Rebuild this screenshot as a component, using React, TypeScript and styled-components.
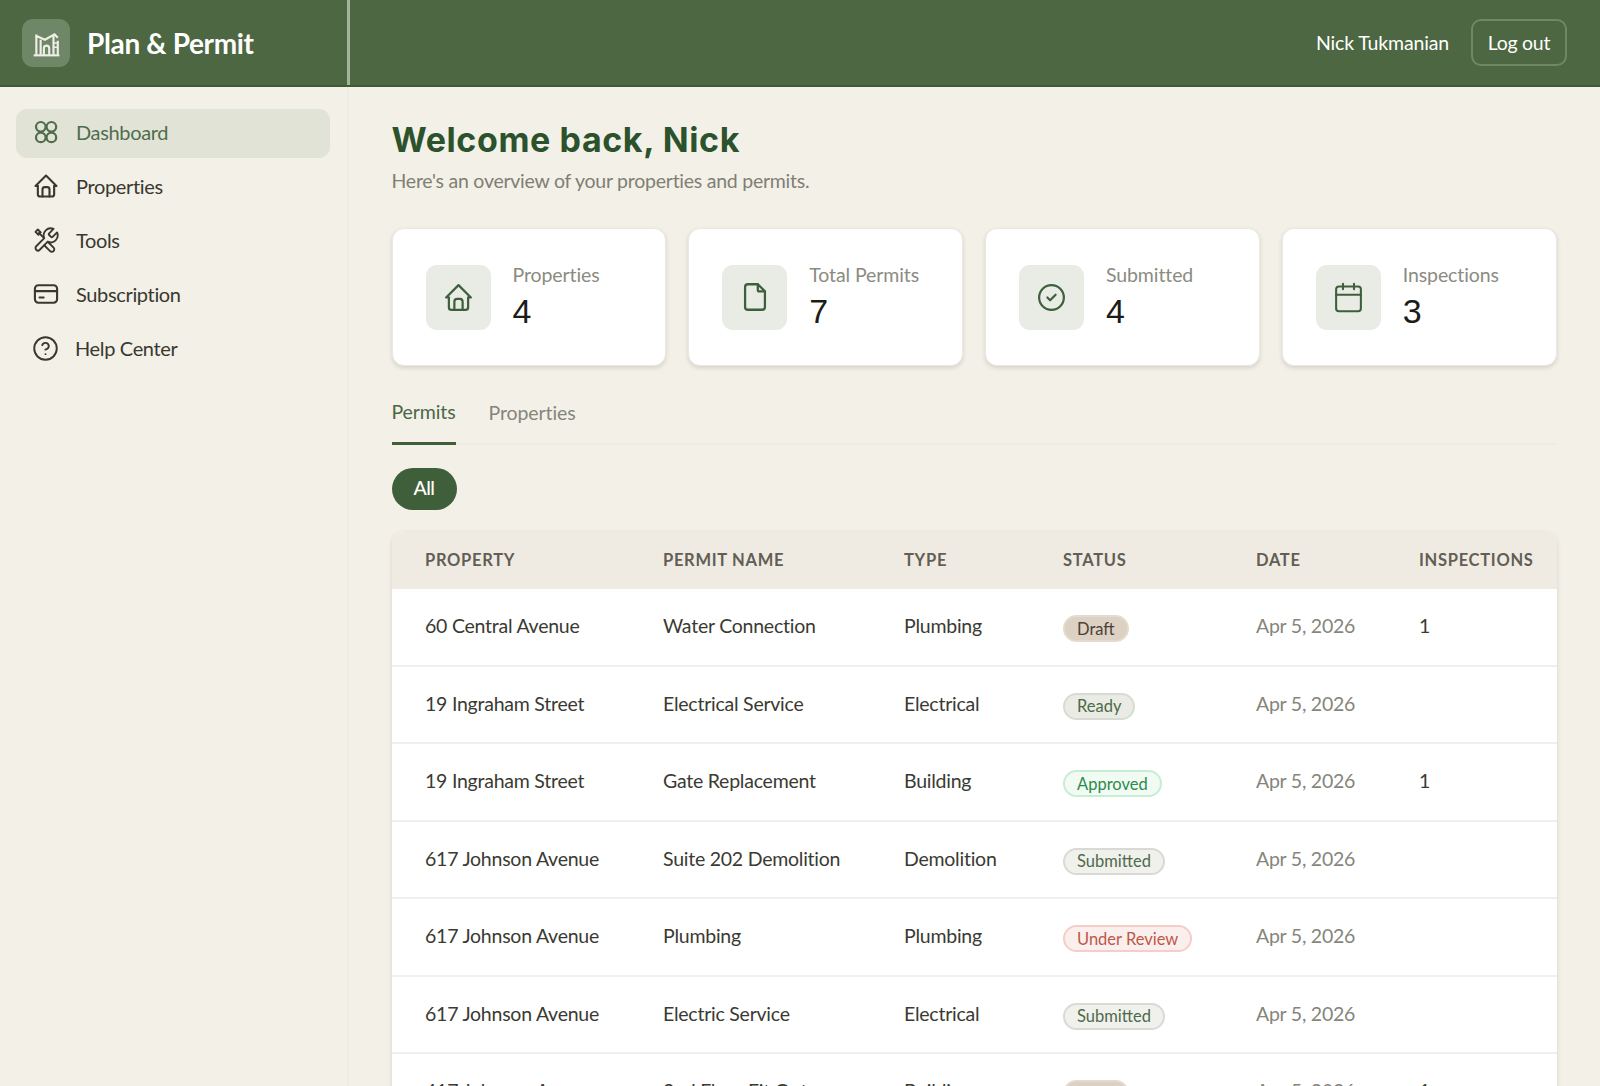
import styled, { createGlobalStyle } from 'styled-components';
import { TbCircleCheck, TbFile, TbHome } from 'react-icons/tb';
import { Calendar, CircleHelp } from 'lucide-react';

type Tone = 'draft' | 'ready' | 'approved' | 'submitted' | 'review';

const toneColors: Record<Tone, { bg: string; border: string; text: string }> = {
  draft: { bg: '#dcd1c3', border: '#e3dbcf', text: '#4b4137' },
  ready: { bg: '#e9ebe4', border: '#d8dbd2', text: '#4d6a49' },
  approved: { bg: '#f1fbf4', border: '#c5eed2', text: '#2c8a4c' },
  submitted: { bg: '#f0f1ed', border: '#d8dad3', text: '#4d6a49' },
  review: { bg: '#fbefee', border: '#f5cdc9', text: '#bd5848' }
};

const stats = [
  { label: 'Properties', value: 4, icon: <TbHome size={33} strokeWidth={1.6} /> },
  { label: 'Total Permits', value: 7, icon: <TbFile size={34} strokeWidth={1.6} /> },
  { label: 'Submitted', value: 4, icon: <TbCircleCheck size={33} strokeWidth={1.6} /> },
  { label: 'Inspections', value: 3, icon: <Calendar size={33} strokeWidth={1.5} /> }
];

const permits: { property: string; name: string; type: string; status: string; tone: Tone; inspections?: number }[] = [
  { property: '60 Central Avenue', name: 'Water Connection', type: 'Plumbing', status: 'Draft', tone: 'draft', inspections: 1 },
  { property: '19 Ingraham Street', name: 'Electrical Service', type: 'Electrical', status: 'Ready', tone: 'ready' },
  { property: '19 Ingraham Street', name: 'Gate Replacement', type: 'Building', status: 'Approved', tone: 'approved', inspections: 1 },
  { property: '617 Johnson Avenue', name: 'Suite 202 Demolition', type: 'Demolition', status: 'Submitted', tone: 'submitted' },
  { property: '617 Johnson Avenue', name: 'Plumbing', type: 'Plumbing', status: 'Under Review', tone: 'review' },
  { property: '617 Johnson Avenue', name: 'Electric Service', type: 'Electrical', status: 'Submitted', tone: 'submitted' },
  { property: '417 Johnson Avenue', name: '2nd Floor Fit Out', type: 'Building', status: 'Draft', tone: 'draft', inspections: 1 }
];

const columns = '238px 241px 159px 193px 163px 1fr';

const GlobalStyle = createGlobalStyle`
  html, body {
    margin: 0;
    padding: 0;
    background: #f3f0e8;
  }
  * {
    box-sizing: border-box;
  }
`;

const Root = styled.div`
  width: 1600px;
  height: 1086px;
  overflow: hidden;
  display: flex;
  flex-direction: column;
  background: #f3f0e8;
  font-family: Lato, 'Liberation Sans', sans-serif;
`;

const Header = styled.header`
  flex: none;
  height: 87px;
  display: flex;
  background: #4c6741;
  border-bottom: 2px solid #3f5a37;
  color: #fff;
`;

const Brand = styled.div`
  width: 350px;
  display: flex;
  align-items: center;
  gap: 17px;
  padding-left: 22px;
  border-right: 3px solid #a3b39c;
`;

const LogoBox = styled.div`
  width: 48px;
  height: 48px;
  display: flex;
  align-items: center;
  justify-content: center;
  border-radius: 11px;
  background: #6f8766;
  color: #eef0e8;
`;

const BrandName = styled.div`
  font-size: 28px;
  font-weight: 700;
  letter-spacing: -0.35px;
`;

const UserArea = styled.div`
  flex: 1;
  display: flex;
  align-items: center;
  justify-content: flex-end;
  gap: 22px;
  padding-right: 33px;
`;

const UserName = styled.span`
  font-size: 19.5px;
  letter-spacing: -0.15px;
`;

const LogOut = styled.button`
  width: 96px;
  height: 47px;
  border: 2px solid #6f8866;
  border-radius: 10px;
  background: transparent;
  color: #fff;
  font-family: inherit;
  font-size: 19.5px;
  letter-spacing: -0.3px;
`;

const Body = styled.div`
  flex: 1;
  display: flex;
  min-height: 0;
`;

const Sidebar = styled.nav`
  flex: none;
  width: 349px;
  display: flex;
  flex-direction: column;
  gap: 5px;
  padding: 22px 17px 0 16px;
  border-right: 2px solid #eeebe4;
`;

const NavItem = styled.a<{ $active?: boolean }>`
  height: 49px;
  display: flex;
  align-items: center;
  gap: 16px;
  padding: 0 0 3px 16px;
  border-radius: 11px;
  background: ${({ $active }) => ($active ? '#e2e3d7' : 'transparent')};
  color: ${({ $active }) => ($active ? '#4f6d4b' : '#38382f')};
  font-size: 20px;
  letter-spacing: -0.35px;
`;

const Main = styled.main`
  flex: 1;
  min-width: 0;
  padding: 33px 43.5px 0 42.5px;
`;

const Title = styled.h1`
  margin: 0;
  color: #2b522c;
  font-family: Inter, 'Liberation Sans', sans-serif;
  font-size: 34px;
  font-weight: 700;
  letter-spacing: 0.6px;
  line-height: 40px;
`;

const Subtitle = styled.p`
  margin: 9px 0 0;
  color: #7f7f74;
  font-size: 19.5px;
  letter-spacing: -0.25px;
  line-height: 24px;
`;

const StatGrid = styled.div`
  display: grid;
  grid-template-columns: repeat(4, 1fr);
  gap: 22px;
  margin-top: 35px;
`;

const StatCard = styled.div`
  height: 138px;
  display: flex;
  align-items: center;
  gap: 22px;
  padding: 0 33px;
  border-radius: 12px;
  background: #fff;
  border: 1px solid #ebe8e1;
  box-shadow: 0 2px 4px rgba(60, 55, 40, 0.16);
`;

const StatIcon = styled.div`
  width: 65px;
  height: 65px;
  display: flex;
  align-items: center;
  justify-content: center;
  border-radius: 11px;
  background: #e9ebe5;
  color: #3d5f3c;
`;

const StatLabel = styled.div`
  color: #8b8b82;
  font-size: 19.5px;
  letter-spacing: -0.1px;
  line-height: 24px;
`;

const StatValue = styled.div`
  margin-top: 4px;
  color: #1c1c18;
  font-family: 'Liberation Sans', sans-serif;
  font-size: 34px;
  line-height: 40px;
`;

const Tabs = styled.div`
  display: flex;
  gap: 33px;
  margin-top: 25px;
  border-bottom: 2px solid #ecebe4;
`;

const Tab = styled.div<{ $active?: boolean }>`
  height: 54px;
  margin-bottom: -2px;
  padding-top: ${({ $active }) => ($active ? '9px' : '10px')};
  border-bottom: 3px solid ${({ $active }) => ($active ? '#3f5e3a' : 'transparent')};
  color: ${({ $active }) => ($active ? '#4a6746' : '#85857b')};
  font-size: 19.5px;
  letter-spacing: -0.1px;
  line-height: 24px;
`;

const FilterPill = styled.button`
  display: block;
  width: 65px;
  height: 42px;
  margin-top: 23px;
  padding: 0 0 3px;
  border: none;
  border-radius: 21px;
  background: #3f5e3a;
  color: #fff;
  font-family: inherit;
  font-size: 19.5px;
  font-weight: 500;
  letter-spacing: -0.5px;
`;

const Table = styled.div`
  margin-top: 22px;
  border-radius: 12px 12px 0 0;
  background: #fff;
  box-shadow: 0 1px 4px rgba(60, 55, 40, 0.16);
  overflow: hidden;
`;

const HeadRow = styled.div`
  display: grid;
  grid-template-columns: ${columns};
  height: 57px;
  padding-bottom: 2px;
  align-items: center;
  background: #efebe3;
`;

const HeadCell = styled.div`
  padding-left: 33.5px;
  color: #625e54;
  font-size: 16.5px;
  font-weight: 700;
  letter-spacing: 0.7px;
  text-transform: uppercase;
  white-space: nowrap;
`;

const Row = styled.div`
  display: grid;
  grid-template-columns: ${columns};
  height: 77.5px;
  padding-bottom: 2px;
  align-items: center;
  border-bottom: 2px solid #f0efea;
`;

const Cell = styled.div<{ $muted?: boolean }>`
  padding-left: 33.5px;
  color: ${({ $muted }) => ($muted ? '#85857b' : '#3a3a32')};
  font-size: 19.5px;
  letter-spacing: -0.24px;
  white-space: nowrap;
`;

const Badge = styled.span<{ $tone: Tone }>`
  display: inline-flex;
  align-items: center;
  height: 27px;
  margin-top: 6px;
  padding: 0 12px;
  border-radius: 14px;
  border: 2px solid ${({ $tone }) => toneColors[$tone].border};
  background: ${({ $tone }) => toneColors[$tone].bg};
  color: ${({ $tone }) => toneColors[$tone].text};
  font-size: 16.5px;
  letter-spacing: 0;
`;

const LogoIcon = () => (
  <svg width="30" height="30" viewBox="0 0 28 28" fill="none" stroke="currentColor" strokeWidth="2">
    <path d="M5 25V6M4 7l9 4 9-5 3 3" />
    <path d="M9 25V11M21 25V7M25 25V12" />
    <path d="M12 25v-6a2 2 0 0 1 5 0v6" />
    <path d="M2.5 25.500h24" />
    <path d="M21 14h4M21 18h4" strokeWidth="1.500" />
  </svg>
);

const DashboardIcon = () => (
  <svg width="28" height="28" viewBox="0 0 28 28" fill="none" stroke="currentColor" strokeWidth="2.2">
    <circle cx="8.800" cy="8.800" r="4.800" />
    <circle cx="19.400" cy="8.800" r="4.800" />
    <circle cx="8.800" cy="19.400" r="4.800" />
    <circle cx="19.400" cy="19.400" r="4.800" />
  </svg>
);

const ToolsIcon = () => (
  <svg width="28" height="28" viewBox="0 0 24 24" fill="none" stroke="currentColor" strokeWidth="1.6" strokeLinecap="round" strokeLinejoin="round">
    <path d="M14.7 6.300a1 1 0 0 0 0 1.400l1.600 1.600a1 1 0 0 0 1.400 0l3.770-3.770a6 6 0 0 1-7.940 7.940l-6.910 6.910a2.120 2.120 0 0 1-3-3l6.910-6.910a6 6 0 0 1 7.940-7.940l-3.760 3.760z" />
    <path d="M9.500 9.500 6 6M3 5l2-2 2.500 2.500-2 2z" />
    <path d="M13.500 13.500l5 5a2 2 0 0 1-3 3l-5-5" />
  </svg>
);

const CardIcon = () => (
  <svg width="28" height="28" viewBox="0 0 24 24" fill="none" stroke="currentColor" strokeWidth="1.8" strokeLinecap="round" strokeLinejoin="round">
    <rect x="2.500" y="4.500" width="19" height="15" rx="3" />
    <path d="M2.500 9.500h19M6.500 15h3.500" />
  </svg>
);

const App = () => {
  return (
    <Root>
      <GlobalStyle />
      <Header>
        <Brand>
          <LogoBox>
            <LogoIcon />
          </LogoBox>
          <BrandName>Plan &amp; Permit</BrandName>
        </Brand>
        <UserArea>
          <UserName>Nick Tukmanian</UserName>
          <LogOut>Log out</LogOut>
        </UserArea>
      </Header>
      <Body>
        <Sidebar>
          <NavItem $active>
            <DashboardIcon />
            Dashboard
          </NavItem>
          <NavItem>
            <TbHome size={28} strokeWidth={1.8} />
            Properties
          </NavItem>
          <NavItem>
            <ToolsIcon />
            Tools
          </NavItem>
          <NavItem>
            <CardIcon />
            Subscription
          </NavItem>
          <NavItem>
            <CircleHelp size={27} strokeWidth={1.7} />
            Help Center
          </NavItem>
        </Sidebar>
        <Main>
          <Title>Welcome back, Nick</Title>
          <Subtitle>Here's an overview of your properties and permits.</Subtitle>
          <StatGrid>
            {stats.map((stat) => (
              <StatCard key={stat.label}>
                <StatIcon>{stat.icon}</StatIcon>
                <div>
                  <StatLabel>{stat.label}</StatLabel>
                  <StatValue>{stat.value}</StatValue>
                </div>
              </StatCard>
            ))}
          </StatGrid>
          <Tabs>
            <Tab $active>Permits</Tab>
            <Tab>Properties</Tab>
          </Tabs>
          <FilterPill>All</FilterPill>
          <Table>
            <HeadRow>
              <HeadCell>Property</HeadCell>
              <HeadCell>Permit Name</HeadCell>
              <HeadCell>Type</HeadCell>
              <HeadCell>Status</HeadCell>
              <HeadCell>Date</HeadCell>
              <HeadCell>Inspections</HeadCell>
            </HeadRow>
            {permits.map((permit, index) => (
              <Row key={index}>
                <Cell>{permit.property}</Cell>
                <Cell>{permit.name}</Cell>
                <Cell>{permit.type}</Cell>
                <Cell>
                  <Badge $tone={permit.tone}>{permit.status}</Badge>
                </Cell>
                <Cell $muted>Apr 5, 2026</Cell>
                <Cell>{permit.inspections}</Cell>
              </Row>
            ))}
          </Table>
        </Main>
      </Body>
    </Root>
  );
};

export default App;
